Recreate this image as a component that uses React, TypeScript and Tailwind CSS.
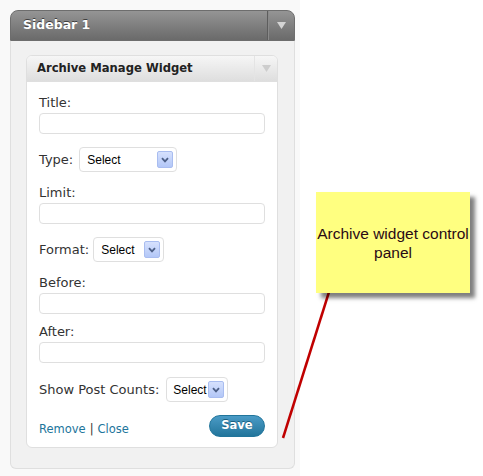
import React from 'react';

const Chevron = () => (
  <span className="flex h-[17px] w-[16px] shrink-0 items-center justify-center rounded-[2px] border border-[#a9bdf0] bg-gradient-to-b from-[#d6e1fd] to-[#b3c7f7]">
    <svg width="8" height="6" viewBox="0 0 8 6">
      <path d="M1 1.2 L4 4.4 L7 1.2" stroke="#4c5f86" strokeWidth="1.8" fill="none" />
    </svg>
  </span>
);

const SelectBox = ({ width, pl }: { width: string; pl: string }) => (
  <div
    className={`flex h-[25px] items-center rounded-[4px] border border-[#dfdfdf] bg-white pr-[3px] ${width} ${pl}`}
  >
    <span className="shrink-0 font-['Liberation_Sans',sans-serif] text-[12px] text-black">Select</span>
    <span className="ml-auto">
      <Chevron />
    </span>
  </div>
);

const Field = ({ label, className = '' }: { label: string; className?: string }) => (
  <div className={`flex flex-col ${className}`}>
    <label className="leading-[16px]">{label}</label>
    <div className="mt-[2px] h-[21px] w-full rounded-[4px] border border-[#dfdfdf] bg-white" />
  </div>
);

const SelectRow = ({
  label,
  gap,
  width,
  pl,
  className = '',
}: {
  label: string;
  gap: string;
  width: string;
  pl: string;
  className?: string;
}) => (
  <div className={`flex items-center ${className}`}>
    <span className={`leading-[16px] ${gap}`}>{label}</span>
    <SelectBox width={width} pl={pl} />
  </div>
);

export default function App() {
  return (
    <div className="relative h-[476px] w-[483px] overflow-hidden bg-white font-['DejaVu_Sans',sans-serif] text-[13px] text-[#333]">
      <div className="h-full w-[300px] bg-[#f9f9f9] pl-[10px] pt-[10px]">
        <div className="w-[285px]">
          {/* sidebar header */}
          <div className="flex h-[31px] items-stretch rounded-t-[8px] border border-[#6d6d6d] bg-gradient-to-b from-[#959595] to-[#6a6a6a]">
            <div className="flex flex-1 items-center pl-[12px] text-[12.5px] font-bold text-white [text-shadow:0_-1px_0_#3f3f3f]">
              Sidebar 1
            </div>
            <div className="flex w-[27px] items-center justify-center border-l border-[#5d5d5d] shadow-[inset_1px_0_0_#8a8a8a]">
              <svg width="9" height="7" viewBox="0 0 9 7">
                <path d="M0 0 H9 L4.5 7 Z" fill="#d4d4d4" />
              </svg>
            </div>
          </div>

          {/* sidebar body */}
          <div className="rounded-b-[6px] border-x border-b border-[#dfdfdf] bg-[#f1f1f1] pb-[20px] pl-[15px] pt-[14px]">
            <div className="w-[252px] overflow-hidden rounded-[6px] border border-[#dfdfdf] bg-white">
              {/* widget header */}
              <div className="flex h-[26px] items-stretch border-b border-[#dfdfdf] bg-gradient-to-b from-[#f6f6f6] to-[#dedede]">
                <div className="flex flex-1 items-center pl-[10px] text-[11.6px] font-bold text-[#222]">
                  Archive Manage Widget
                </div>
                <div className="flex w-[23px] items-center justify-center border-l border-[#e4e4e4]">
                  <svg width="9" height="7" viewBox="0 0 9 7">
                    <path d="M0 0 H9 L4.5 7 Z" fill="#cdcdcd" />
                  </svg>
                </div>
              </div>

              {/* widget form */}
              <div className="flex flex-col gap-[13px] pb-[10px] pl-[12px] pr-[12px] pt-[13px]">
                <Field label="Title:" />
                <SelectRow label="Type:" gap="mr-[6px]" width="w-[98px]" pl="pl-[7px]" />
                <Field label="Limit:" />
                <SelectRow label="Format:" gap="mr-[4px]" width="w-[71px]" pl="pl-[7px]" />
                <Field label="Before:" />
                <Field label="After:" className="-mt-[3px]" />
                <SelectRow label="Show Post Counts:" gap="mr-[7px]" width="w-[62px]" pl="pl-[6px]" className="mt-[1px]" />

                <div className="flex items-end justify-between">
                  <div className="pb-[1px] text-[11.5px] leading-[14px]">
                    <a className="text-[#21759b]">Remove</a>
                    <span className="mx-[4px] text-[#333]">|</span>
                    <a className="text-[#21759b]">Close</a>
                  </div>
                  <button className="flex h-[22px] w-[56px] items-center justify-center rounded-full border border-[#21759b] bg-gradient-to-b from-[#4a9bc6] to-[#21759b] text-[11.5px] font-bold text-white [text-shadow:0_-1px_0_#1a5f80]">
                    Save
                  </button>
                </div>
              </div>
            </div>
          </div>
        </div>
      </div>

      {/* annotation */}
      <svg className="absolute left-0 top-0" width="483" height="476">
        <line x1="329" y1="292" x2="283" y2="438" stroke="#c00000" strokeWidth="2.5" />
      </svg>
      <div className="absolute left-[316px] top-[192px] flex h-[101px] w-[154px] items-center justify-center bg-[#ffff80] text-center font-['Liberation_Sans',sans-serif] text-[15.5px] leading-[19px] text-[#2a0a14] shadow-[5px_5px_4px_rgba(0,0,0,0.5)]">
        <span className="whitespace-nowrap">
          Archive widget control
          <br />
          panel
        </span>
      </div>
    </div>
  );
}
